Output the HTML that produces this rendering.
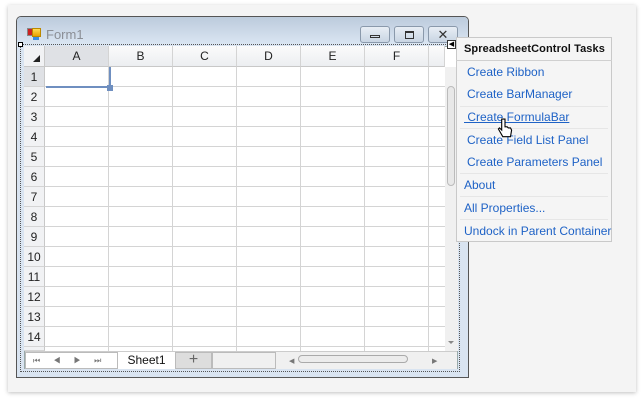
<!DOCTYPE html>
<html><head><style>
*{margin:0;padding:0;box-sizing:border-box}
body{width:644px;height:402px;background:#fff;position:relative;overflow:hidden;font-family:"Liberation Sans",sans-serif;font-size:12px}
.a{position:absolute}
.panel{left:8px;top:5px;width:628px;height:387px;background:#f4f4f4;box-shadow:0 1px 4px rgba(0,0,0,.25)}
.form{left:16px;top:16px;width:453px;height:362px;border:1px solid #555;border-radius:5px 5px 0 0;background:#d9e4f1}
.title{left:17px;top:17px;width:451px;height:28px;background:linear-gradient(#bccbdc,#dbe6f3);border-radius:4px 4px 0 0}
.btn{top:26px;width:30px;height:17px;border:1px solid #8a99ab;border-radius:3px;background:linear-gradient(#e8eef5,#c9d5e3)}
.grid{left:45px;top:67px;width:400px;height:284px;background:#fff;
background-image:repeating-linear-gradient(90deg,transparent 0 63px,#d4d4d4 63px 64px),repeating-linear-gradient(180deg,transparent 0 19px,#d4d4d4 19px 20px)}
.ch{top:46px;height:21px;background:linear-gradient(#fbfbfb,#eceef1);border-right:1px solid #d4d4d4;border-bottom:1px solid #c8c8c8;text-align:center;line-height:21px;color:#222}
.rh{left:24px;width:21px;height:20px;background:#f1f2f4;border-bottom:1px solid #d4d4d4;border-right:1px solid #c8c8c8;text-align:center;line-height:20px;color:#222}
.tp{left:456px;top:37px;width:156px;height:205px;background:#f5f5f5;border:1px solid #c9c9c9}
.it{left:467px;color:#1e62c6;font-size:12px}
.sep{left:460px;width:148px;height:1px;background:#e6e6e6}
</style></head><body>
<div class="a panel"></div>
<div class="a form"></div>
<div class="a title"></div>
<div class="a" style="left:27px;top:28px;width:7px;height:8px;background:#c22;border:1px solid #888"></div>
<div class="a" style="left:32px;top:28px;width:9px;height:9px;background:linear-gradient(#fd5,#e9a200);border:1px solid #b80"></div>
<div class="a" style="left:33px;top:37px;width:6px;height:3px;background:#3a8de0"></div>
<div class="a" style="left:46px;top:27px;color:#8b8f96;font-size:13px">Form1</div>
<div class="a btn" style="left:360px"><div class="a" style="left:9px;top:8px;width:10px;height:3px;border:1px solid #333"></div></div>
<div class="a btn" style="left:394px"><div class="a" style="left:10px;top:4px;width:9px;height:8px;border:1px solid #333;border-top-width:2px"></div></div>
<div class="a btn" style="left:428px;text-align:center;line-height:15px;color:#333;font-size:13px">✕</div>
<div class="a" style="left:20px;top:44px;width:440px;height:328px;border:1px dotted #555"></div>
<div class="a" style="left:18px;top:42px;width:5px;height:5px;border:1px solid #000;background:#fff"></div>
<div class="a" style="left:24px;top:46px;width:434px;height:323px;background:#fff;border:1px solid #9aa"></div>
<div class="a" style="left:24px;top:46px;width:21px;height:21px;background:#f1f2f4;border-right:1px solid #c8c8c8;border-bottom:1px solid #c8c8c8"></div>
<div class="a" style="left:33px;top:55px;width:0;height:0;border-left:7px solid transparent;border-bottom:7px solid #222"></div>
<div class="a ch" style="left:45px;width:64px;background:#dfe1e5">A</div>
<div class="a ch" style="left:109px;width:64px">B</div>
<div class="a ch" style="left:173px;width:64px">C</div>
<div class="a ch" style="left:237px;width:64px">D</div>
<div class="a ch" style="left:301px;width:64px">E</div>
<div class="a ch" style="left:365px;width:64px">F</div>
<div class="a ch" style="left:429px;width:16px"></div>
<div class="a grid"></div>
<div class="a rh" style="top:67px;background:#dfe1e5">1</div>
<div class="a rh" style="top:87px">2</div>
<div class="a rh" style="top:107px">3</div>
<div class="a rh" style="top:127px">4</div>
<div class="a rh" style="top:147px">5</div>
<div class="a rh" style="top:167px">6</div>
<div class="a rh" style="top:187px">7</div>
<div class="a rh" style="top:207px">8</div>
<div class="a rh" style="top:227px">9</div>
<div class="a rh" style="top:247px">10</div>
<div class="a rh" style="top:267px">11</div>
<div class="a rh" style="top:287px">12</div>
<div class="a rh" style="top:307px">13</div>
<div class="a rh" style="top:327px">14</div>
<div class="a rh" style="top:347px;height:4px"></div>
<div class="a" style="left:109px;top:67px;width:2px;height:20px;background:#6f8fc0"></div>
<div class="a" style="left:46px;top:86px;width:64px;height:2px;background:#6f8fc0"></div>
<div class="a" style="left:107px;top:85px;width:6px;height:6px;background:#6f8fc0"></div>
<div class="a" style="left:445px;top:67px;width:13px;height:284px;background:#f0f0f0"></div>
<div class="a" style="left:447px;top:86px;width:8px;height:100px;background:#e8e8e8;border:1px solid #bbb;border-radius:4px"></div>
<div class="a" style="left:448px;top:341px;border-left:3px solid transparent;border-right:3px solid transparent;border-top:3px solid #888"></div>
<div class="a" style="left:25px;top:351px;width:432px;height:18px;background:#f0f0f0;border-top:1px solid #ccc"></div>
<div class="a" style="left:25px;top:352px;width:93px;height:17px;background:#fff;border:1px solid #bbb;font-size:8px;color:#777;line-height:15px;word-spacing:11px;padding-left:7px">⏮ ◀ ▶ ⏭</div>
<div class="a" style="left:118px;top:352px;width:57px;height:17px;background:#fff;text-align:center;line-height:17px;color:#111">Sheet1</div>
<div class="a" style="left:175px;top:352px;width:37px;height:17px;background:#ddd;border:1px solid #bbb;text-align:center;line-height:14px;font-size:16px;color:#666">+</div>
<div class="a" style="left:212px;top:352px;width:64px;height:17px;border:1px solid #bbb;background:#f0f0f0"></div>
<div class="a" style="left:298px;top:355px;width:110px;height:8px;border:1px solid #aaa;border-radius:4px;background:#ececec"></div>
<div class="a" style="left:289px;top:357px;font-size:7px;color:#777">◀</div>
<div class="a" style="left:432px;top:357px;font-size:7px;color:#777">▶</div>
<div class="a" style="left:447px;top:40px;width:9px;height:9px;border:1px solid #333;background:#fff;font-size:7px;line-height:7px;text-align:center">◀</div>
<div class="a tp"></div>
<div class="a" style="left:464px;top:43px;font-weight:bold;color:#111;font-size:11px;letter-spacing:.1px">SpreadsheetControl Tasks</div>
<div class="a" style="left:456px;top:60px;width:156px;height:1px;background:#d0d0d0"></div>
<div class="a it" style="top:65px">Create Ribbon</div>
<div class="a it" style="top:87px">Create BarManager</div>
<div class="a sep" style="top:106px"></div>
<div class="a it" style="top:110px;left:464px;text-decoration:underline">&nbsp;Create FormulaBar</div>
<div class="a sep" style="top:128px"></div>
<div class="a it" style="top:133px">Create Field List Panel</div>
<div class="a it" style="top:155px">Create Parameters Panel</div>
<div class="a sep" style="top:173px"></div>
<div class="a it" style="top:178px;left:464px">About</div>
<div class="a sep" style="top:196px"></div>
<div class="a it" style="top:201px;left:464px">All Properties...</div>
<div class="a sep" style="top:219px"></div>
<div class="a it" style="top:224px;left:464px">Undock in Parent Container</div>
<svg class="a" style="left:496px;top:118px" width="18" height="22" viewBox="0 0 14 20"><path d="M4 1v10l-2-2-1 1 4 7h7l1-6-1-2-2 0-1-1-2 0V1z" fill="#fff" stroke="#000" stroke-width="1"/></svg>
</body></html>
